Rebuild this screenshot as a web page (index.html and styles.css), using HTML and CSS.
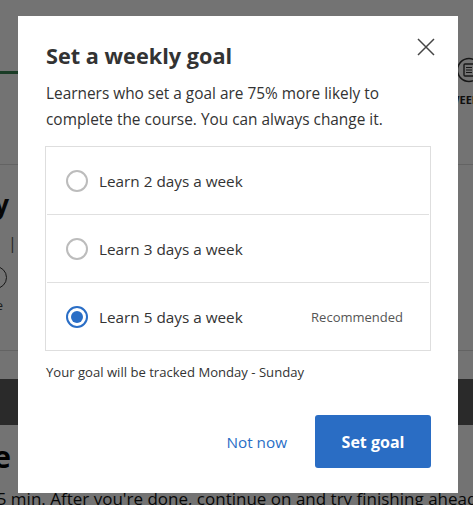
FILE: index.html
```html
<!DOCTYPE html>
<html lang="en">
<head>
<meta charset="utf-8">
<title>Set a weekly goal</title>
<link rel="stylesheet" href="styles.css">
</head>
<body>
<div class="page">
  <div class="topbar">
    <div class="tab-active"></div>
    <div class="tab-right">
      <span class="tab-icon">
        <svg width="26" height="26" viewBox="0 0 26 26"><circle cx="13" cy="13" r="11.5" fill="none" stroke="#333" stroke-width="1.5"/><rect x="8" y="7" width="10" height="12" rx="1" fill="none" stroke="#333" stroke-width="1.4"/><path d="M10 10.5h6M10 13h6M10 15.5h6" stroke="#333" stroke-width="1.2"/></svg>
      </span>
      <span class="tab-label">WEEK</span>
    </div>
  </div>
  <div class="summary">
    <div class="sum-row sum-title-row"><span class="sum-title">Weekly</span></div>
    <div class="sum-sep">|</div>
    <div class="sum-row sum-icon-row"><span class="sum-icon"></span></div>
    <div class="sum-row sum-text-row"><span class="sum-text">Done</span></div>
  </div>
  <div class="darkbar"></div>
  <div class="content">
    <div class="sum-row content-title-row"><span class="content-title">Course schedule</span></div>
    <div class="content-text">15 min. After you're done, continue on and try finishing ahead of schedule.</div>
  </div>
</div>
<div class="overlay"></div>
<div class="modal" role="dialog" aria-labelledby="goal-title">
  <button class="close" aria-label="Close">
    <svg width="18" height="18" viewBox="0 0 18 18"><path d="M1 1L17 17M17 1L1 17" stroke="#454545" stroke-width="1.5"/></svg>
  </button>
  <h2 id="goal-title" class="title">Set a weekly goal</h2>
  <p class="lead">Learners who set a goal are 75% more likely to complete the course. You can always change it.</p>
  <div class="options">
    <label class="option"><span class="radio"></span><span class="opt-label">Learn 2 days a week</span></label>
    <label class="option"><span class="radio"></span><span class="opt-label">Learn 3 days a week</span></label>
    <label class="option"><span class="radio checked"></span><span class="opt-label">Learn 5 days a week</span><span class="recommended">Recommended</span></label>
  </div>
  <p class="note">Your goal will be tracked Monday - Sunday</p>
  <div class="actions">
    <button class="link-btn">Not now</button>
    <button class="primary-btn">Set goal</button>
  </div>
</div>
</body>
</html>
```

FILE: styles.css
```css
html, body {
  margin: 0;
  padding: 0;
  background: #ffffff;
  font-family: "Open Sans", "Noto Sans", sans-serif;
  color: #333;
  overflow: hidden;
}
.page {
  width: 473px;
  height: 505px;
  overflow: hidden;
}
.topbar {
  height: 165px;
  border-bottom: 1px solid #dcdcdc;
  box-sizing: border-box;
  display: flex;
  justify-content: space-between;
  align-items: flex-start;
}
.tab-active {
  margin-top: 71px;
  width: 60px;
  height: 3px;
  background: #3a8656;
}
.tab-right {
  margin-top: 57px;
  display: flex;
  flex-direction: column;
  align-items: center;
  width: 44px;
  margin-right: -18px;
}
.tab-icon { display: block; height: 26px; }
.tab-label {
  margin-top: 10px;
  margin-right: 10px;
  font-weight: 700;
  font-size: 11px;
  line-height: 14px;
  color: #222;
}
.summary {
  height: 186px;
  border-bottom: 1px solid #dcdcdc;
  box-sizing: border-box;
  display: flex;
  flex-direction: column;
}
.sum-row {
  display: flex;
  justify-content: flex-end;
  white-space: nowrap;
}
.sum-title-row {
  width: 9px;
  margin-top: 24px;
}
.sum-title {
  font-weight: 700;
  font-size: 26px;
  color: #111;
  line-height: 30px;
}
.sum-sep {
  margin-top: 14px;
  margin-left: 8px;
  color: #555;
  font-size: 16px;
  line-height: 20px;
}
.sum-icon-row {
  width: 7px;
  margin-top: 13px;
}
.sum-icon {
  flex: none;
  width: 21px;
  height: 21px;
  border: 1.5px solid #333;
  border-radius: 50%;
}
.sum-text-row {
  width: 3px;
  margin-top: 7px;
}
.sum-text {
  font-size: 13px;
  color: #444;
  line-height: 18px;
}
.darkbar {
  margin-top: 28px;
  height: 46px;
  background: #5e5e5e;
}
.content-title-row {
  width: 11px;
  margin-top: 14px;
}
.content-title {
  font-weight: 700;
  font-size: 30px;
  line-height: 36px;
  color: #000;
}
.content-text {
  margin-top: 12px;
  margin-left: -13px;
  font-size: 17px;
  line-height: 24px;
  color: #111;
  white-space: nowrap;
}
.overlay {
  position: fixed;
  inset: 0;
  background: rgba(0, 0, 0, 0.55);
}
.modal {
  position: fixed;
  left: 18px;
  top: 16px;
  width: 440px;
  height: 477px;
  box-sizing: border-box;
  background: #fff;
  padding: 25px 27px 0 28px;
  display: flex;
  flex-direction: column;
}
.close {
  position: absolute;
  right: 23px;
  top: 22px;
  width: 18px;
  height: 18px;
  padding: 0;
  border: 0;
  background: transparent;
  line-height: 0;
}
.title {
  margin: 0;
  font-size: 21.7px;
  line-height: 30px;
  font-weight: 700;
  color: #333;
}
.lead {
  margin: 10px 0 0 0;
  font-size: 15.4px;
  line-height: 26px;
  color: #333;
}
.options {
  margin-top: 13px;
  margin-right: 0;
  margin-left: -1px;
  border: 1px solid #dedede;
  display: flex;
  flex-direction: column;
}
.option {
  height: 67px;
  display: flex;
  align-items: center;
  padding: 0 26px 0 19px;
  border-top: 1px solid #e0e0e0;
  margin: 0 1px;
}
.option:first-child { border-top: 0; }
.radio {
  width: 18px;
  height: 18px;
  border: 2px solid #bcbcbc;
  border-radius: 50%;
  box-sizing: content-box;
  flex: none;
  display: flex;
  align-items: center;
  justify-content: center;
}
.radio.checked {
  border-color: #2a6ec6;
}
.radio.checked::after {
  content: "";
  width: 12px;
  height: 12px;
  border-radius: 50%;
  background: #2a6ec6;
}
.opt-label {
  margin-left: 11px;
  font-size: 15.3px;
  color: #333;
}
.recommended {
  margin-left: auto;
  font-size: 13px;
  color: #555;
}
.note {
  margin: 12px 0 0 0;
  font-size: 13.1px;
  line-height: 18px;
  color: #333;
}
.actions {
  margin-top: 34px;
  display: flex;
  justify-content: flex-end;
  align-items: center;
}
.link-btn {
  border: 0;
  background: transparent;
  color: #2a6ec6;
  font-family: inherit;
  font-size: 15.3px;
  padding: 0;
  margin-right: 28px;
}
.primary-btn {
  width: 116px;
  height: 53px;
  border: 0;
  border-radius: 3px;
  background: #2a6dc4;
  color: #fff;
  font-family: inherit;
  font-size: 16px;
  font-weight: 700;
}
```
